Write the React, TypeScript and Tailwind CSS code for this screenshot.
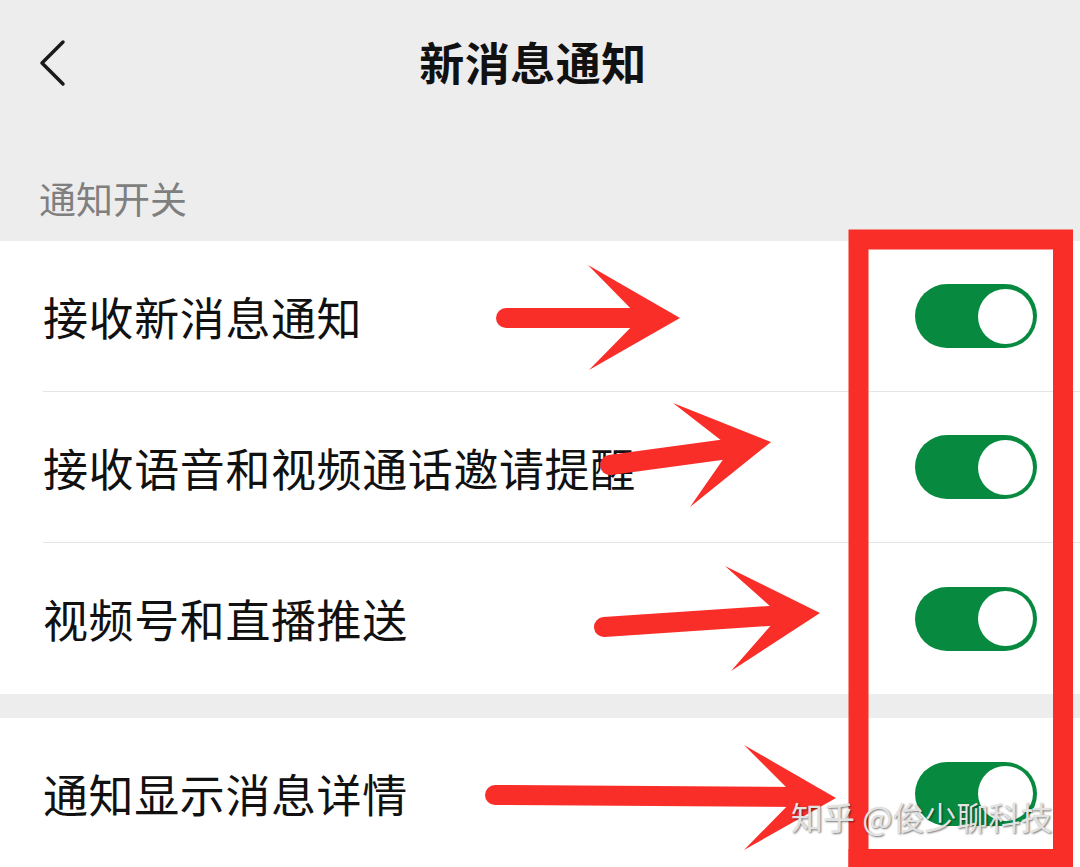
const rows = [
  "接收新消息通知",
  "接收语音和视频通话邀请提醒",
  "视频号和直播推送",
];

function Toggle() {
  return (
    <div className="flex h-[64px] w-[122px] shrink-0 items-center justify-end rounded-full bg-[#078a3f] pr-[4px]">
      <div className="h-[55px] w-[55px] rounded-full bg-white" />
    </div>
  );
}

function Row({ label, divider }: { label: string; divider: boolean }) {
  return (
    <div className="bg-white pl-[43px]">
      <div
        className={
          "flex h-[151px] items-center justify-between pr-[43px] " +
          (divider ? "border-b border-[#e5e5e5]" : "")
        }
      >
        <span className="text-[45px] leading-none tracking-[0.6px] text-[#111]">{label}</span>
        <Toggle />
      </div>
    </div>
  );
}

// red annotation arrows: shaft start, notch, tip, barbs
const arrows = [
  { s: [506, 318], n: [640, 318], t: [680, 318], a: [588, 265], b: [589, 370] },
  { s: [610, 465], n: [731, 448], t: [771, 442], a: [673, 403], b: [690, 507] },
  { s: [604, 627], n: [780, 615], t: [820, 613], a: [725, 566], b: [731, 671] },
  { s: [495, 795], n: [796, 797], t: [836, 798], a: [744, 745], b: [744, 850] },
];

function Annotations() {
  return (
    <svg
      className="pointer-events-none absolute left-0 top-0"
      width="1080"
      height="867"
      viewBox="0 0 1080 867"
    >
      {arrows.map((r, i) => (
        <g key={i} fill="#fa2e29" stroke="#fa2e29">
          <line
            x1={r.s[0]}
            y1={r.s[1]}
            x2={r.n[0] + 4}
            y2={r.n[1]}
            strokeWidth="20"
            strokeLinecap="round"
          />
          <polygon
            strokeWidth="0"
            points={`${r.t[0]},${r.t[1]} ${r.a[0]},${r.a[1]} ${r.n[0]},${r.n[1]} ${r.b[0]},${r.b[1]}`}
          />
        </g>
      ))}
      <rect
        x="858.5"
        y="239.5"
        width="204.5"
        height="620"
        fill="none"
        stroke="#fa2e29"
        strokeWidth="20"
      />
      <rect x="848.5" y="849" width="224.5" height="20" fill="#fa2e29" />
    </svg>
  );
}

export default function App() {
  return (
    <div
      className="relative h-[867px] w-[1080px] overflow-hidden bg-[#ededed]"
      style={{ fontFamily: '"Noto Sans CJK SC", "Noto Sans", sans-serif' }}
    >
      <div className="relative flex h-[132px] items-center justify-center pb-[10px] pr-[14px]">
        <svg
          className="absolute left-[30px] top-[34px]"
          width="44"
          height="60"
          viewBox="0 0 44 60"
          fill="none"
          stroke="#1a1a1a"
          strokeWidth="3.5"
          strokeLinecap="round"
          strokeLinejoin="round"
        >
          <path d="M33 8 L12 29 L33 50" />
        </svg>
        <span className="text-[45px] font-bold leading-none tracking-[0.5px] text-[#111]">新消息通知</span>
      </div>

      <div className="flex h-[109px] items-end pb-[24px] pl-[39px]">
        <span className="text-[37px] leading-none text-[#7f7f7f]">通知开关</span>
      </div>

      {rows.map((r, i) => (
        <Row key={r} label={r} divider={i < rows.length - 1} />
      ))}

      <div className="h-[24px]" />
      <Row label="通知显示消息详情" divider={false} />

      <Annotations />

      <div className="absolute left-[791px] top-[800px] text-[32px] leading-none text-[#e2e2e2] [text-shadow:1px_1px_2px_rgba(0,0,0,0.55)]">
        知乎 @俊少聊科技
      </div>
    </div>
  );
}
